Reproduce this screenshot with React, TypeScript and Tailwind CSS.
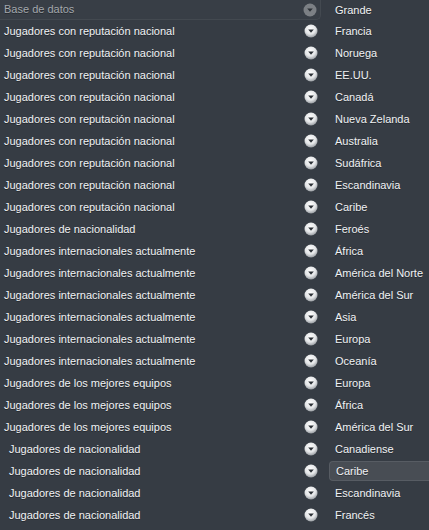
import React from 'react';

type Row = { label: string; value: string; indent?: boolean; selected?: boolean };

const rows: Row[] = [
    { label: 'Jugadores con reputación nacional', value: 'Francia' },
    { label: 'Jugadores con reputación nacional', value: 'Noruega' },
    { label: 'Jugadores con reputación nacional', value: 'EE.UU.' },
    { label: 'Jugadores con reputación nacional', value: 'Canadá' },
    { label: 'Jugadores con reputación nacional', value: 'Nueva Zelanda' },
    { label: 'Jugadores con reputación nacional', value: 'Australia' },
    { label: 'Jugadores con reputación nacional', value: 'Sudáfrica' },
    { label: 'Jugadores con reputación nacional', value: 'Escandinavia' },
    { label: 'Jugadores con reputación nacional', value: 'Caribe' },
    { label: 'Jugadores de nacionalidad', value: 'Feroés' },
    { label: 'Jugadores internacionales actualmente', value: 'África' },
    { label: 'Jugadores internacionales actualmente', value: 'América del Norte' },
    { label: 'Jugadores internacionales actualmente', value: 'América del Sur' },
    { label: 'Jugadores internacionales actualmente', value: 'Asia' },
    { label: 'Jugadores internacionales actualmente', value: 'Europa' },
    { label: 'Jugadores internacionales actualmente', value: 'Oceanía' },
    { label: 'Jugadores de los mejores equipos', value: 'Europa' },
    { label: 'Jugadores de los mejores equipos', value: 'África' },
    { label: 'Jugadores de los mejores equipos', value: 'América del Sur' },
    { label: 'Jugadores de nacionalidad', value: 'Canadiense', indent: true },
    { label: 'Jugadores de nacionalidad', value: 'Caribe', indent: true, selected: true },
    { label: 'Jugadores de nacionalidad', value: 'Escandinavia', indent: true },
    { label: 'Jugadores de nacionalidad', value: 'Francés', indent: true },
];

// round drop-down knob
const Knob = ({ muted }: { muted?: boolean }) => (
    <svg width="14" height="14" viewBox="0 0 14 14" className="shrink-0">
        <defs>
            <radialGradient id="kw" cx="45%" cy="35%" r="65%">
                <stop offset="0%" stopColor="#ffffff" />
                <stop offset="60%" stopColor="#e4e6e8" />
                <stop offset="100%" stopColor="#9a9ea3" />
            </radialGradient>
        </defs>
        <circle cx="7" cy="7" r="6.5" fill={muted ? '#7c8085' : 'url(#kw)'} />
        <path d="M4.2 5.6 H9.8 L7 8.8 Z" fill={muted ? '#2c3137' : '#2a2f35'} />
    </svg>
);

export default function App() {
    return (
        <div
            className="w-[429px] h-[530px] bg-[#363c44] text-[#f0f2f4] text-[11px] overflow-hidden [text-shadow:0_1px_0_rgba(0,0,0,0.35)]"
            style={{ fontFamily: '"Liberation Sans", Arial, sans-serif' }}
        >
            {/* Header row */}
            <div className="flex items-center h-[20px]">
                <div className="flex items-center w-[321px] h-[20px] pl-[4px] pr-[3px] border-b border-r border-[#434950] rounded-br-[5px] bg-[#383e46]">
                    <span className="flex-1 text-[#a3a8ad]">Base de datos</span>
                    <Knob muted />
                </div>
                <span className="pl-[14px]">Grande</span>
            </div>

            {rows.map((r, i) => (
                <div key={i} className="flex items-center h-[22px]">
                    <span className={`w-[304px] shrink-0 ${r.indent ? 'pl-[9px]' : 'pl-[4px]'}`}>{r.label}</span>
                    <Knob />
                    {r.selected ? (
                        <span className="ml-[11px] flex-1 h-[20px] flex items-center pl-[6px] bg-[#484d54] border border-r-0 border-[#575c63] rounded-l-[4px]">
                            {r.value}
                        </span>
                    ) : (
                        <span className="ml-[17px]">{r.value}</span>
                    )}
                </div>
            ))}
        </div>
    );
}
